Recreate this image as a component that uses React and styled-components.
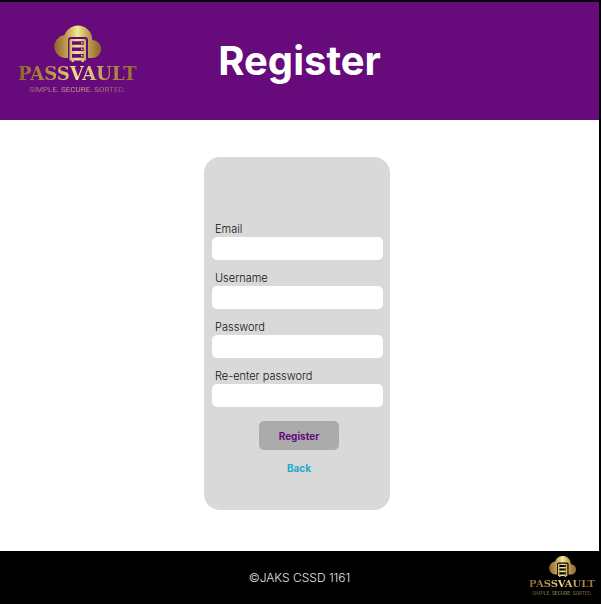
import React, { useId } from "react";
import styled, { createGlobalStyle } from "styled-components";

const GlobalStyle = createGlobalStyle`
  *, *::before, *::after { box-sizing: border-box; }
  body {
    margin: 0;
    background: #fff;
    font-family: Inter, "Liberation Sans", sans-serif;
  }
`;

const Page = styled.div`
  display: flex;
  flex-direction: column;
  min-height: 100vh;
  border-top: 2px solid #000;
  border-right: 2px solid #000;
`;

const Header = styled.header`
  display: grid;
  grid-template-columns: 1fr auto 1fr;
  align-items: center;
  min-height: 118px;
  padding: 0 18px;
  background: #670a7b;
`;

const Title = styled.h1`
  margin: 0;
  color: #fff;
  font-size: 40px;
  line-height: 48px;
  font-weight: 700;
`;

const Main = styled.main`
  flex: 1;
  display: flex;
  justify-content: center;
  align-items: flex-start;
  padding: 37px 5px 41px 0;
`;

const Card = styled.form`
  display: flex;
  flex-direction: column;
  gap: 12px;
  width: 31%;
  min-width: 186px;
  padding: 66px 7px 35px 8px;
  border-radius: 16px;
  background: #d9d9d9;
`;

const Field = styled.div`
  display: flex;
  flex-direction: column;
`;

const Label = styled.label`
  padding: 0 0 2px 3px;
  color: #111;
  font-size: 11px;
  line-height: 12px;
  font-weight: 300;
`;

const Input = styled.input`
  width: 100%;
  height: 23px;
  padding: 0 6px;
  border: 0;
  border-radius: 5px;
  background: #fff;
  font: inherit;
  font-size: 11px;
`;

const Actions = styled.div`
  display: flex;
  flex-direction: column;
  align-items: center;
  gap: 11px;
  padding: 2px 0 0 3px;
`;

const SubmitButton = styled.button`
  width: 80px;
  height: 29px;
  padding: 0;
  border: 0;
  border-radius: 5px;
  background: #ababab;
  color: #670a7b;
  font-family: inherit;
  font-size: 10px;
  font-weight: 700;
  cursor: pointer;
`;

const BackLink = styled.a`
  color: #22a7c8;
  font-size: 10px;
  line-height: 14px;
  font-weight: 700;
  text-decoration: none;
`;

const Footer = styled.footer`
  display: grid;
  grid-template-columns: 1fr auto 1fr;
  align-items: center;
  min-height: 53px;
  padding: 0 4px;
  background: #000;
`;

const Copyright = styled.p`
  grid-column: 2;
  margin: 0;
  color: #e4e4e4;
  font-size: 12px;
  line-height: 16px;
  font-weight: 300;
`;

const Brand = styled.div`
  justify-self: ${(p) => (p.$small ? "end" : "start")};
  display: flex;
  flex-direction: column;
  align-items: center;
  padding-bottom: ${(p) => (p.$small ? 4 : 2)}px;
  white-space: nowrap;
`;

const CloudIcon = styled.svg`
  display: block;
  width: ${(p) => (p.$small ? 27 : 47)}px;
  height: ${(p) => (p.$small ? 22 : 38)}px;
  margin-bottom: ${(p) => (p.$small ? 1 : 2)}px;
`;

const Wordmark = styled.span`
  background: linear-gradient(90deg, #8d6530, #b28b46 25%, #f1e995 52%, #b8924a 75%, #94692f);
  background-clip: text;
  -webkit-background-clip: text;
  color: transparent;
  font-family: "DejaVu Serif", serif;
  font-weight: 700;
  font-size: ${(p) => (p.$small ? 10 : 18)}px;
  line-height: ${(p) => (p.$small ? 12 : 20)}px;
`;

const Tagline = styled.span`
  background: ${(p) =>
    p.$small
      ? "linear-gradient(90deg, #66502c, #a89560 50%, #66502c)"
      : "linear-gradient(90deg, #9c6878, #d0ae96 50%, #8e5478)"};
  background-clip: text;
  -webkit-background-clip: text;
  color: transparent;
  font-family: Roboto, sans-serif;
  font-size: ${(p) => (p.$small ? 5 : 8)}px;
  line-height: ${(p) => (p.$small ? 6 : 12)}px;
`;

function Logo({ small }) {
  const id = useId();
  const gold = `url(#${id})`;
  return (
    <Brand $small={small}>
      <CloudIcon $small={small} viewBox="0 0 47 38" aria-hidden="true">
        <defs>
          <linearGradient id={id} gradientUnits="userSpaceOnUse" x1="0" y1="0" x2="47" y2="0">
            <stop offset="0" stopColor="#8d632c" />
            <stop offset="0.25" stopColor="#bd994f" />
            <stop offset="0.5" stopColor="#f1e994" />
            <stop offset="0.75" stopColor="#bd994f" />
            <stop offset="1" stopColor="#8d632c" />
          </linearGradient>
        </defs>
        <path
          fill={gold}
          d="M14 34H11A11.5 11.5 0 0 1 10.5 11.1A14.3 14.3 0 0 1 38.3 16A9 9 0 0 1 38 34H34V16Q34 13 31 13H17Q14 13 14 16Z"
        />
        <path
          fill={gold}
          fillRule="evenodd"
          d="M17 15H30.5Q32 15 32 16.5V36.5H30V38H27.5V36.5H20V38H17.5V36.5H15.5V16.5Q15.5 15 17 15ZM18 17.3V20.7H29.7V17.3ZM18 23.5V27H29.7V23.5ZM18 30V33.7H29.7V30Z"
        />
        <path fill={gold} d="M27 18.3h1.5v1.4h-1.5zM27 24.6h1.5v1.4h-1.5zM27 31.1h1.5v1.4h-1.5z" />
      </CloudIcon>
      <Wordmark $small={small}>PASSVAULT</Wordmark>
      <Tagline $small={small}>SIMPLE. SECURE. SORTED.</Tagline>
    </Brand>
  );
}

const fields = [
  { id: "email", label: "Email", type: "email" },
  { id: "username", label: "Username", type: "text" },
  { id: "password", label: "Password", type: "password" },
  { id: "confirm", label: "Re-enter password", type: "password" },
];

export default function App() {
  return (
    <>
      <GlobalStyle />
      <Page>
        <Header>
          <Logo />
          <Title>Register</Title>
        </Header>
        <Main>
          <Card onSubmit={(e) => e.preventDefault()}>
            {fields.map((f) => (
              <Field key={f.id}>
                <Label htmlFor={f.id}>{f.label}</Label>
                <Input id={f.id} name={f.id} type={f.type} />
              </Field>
            ))}
            <Actions>
              <SubmitButton type="submit">Register</SubmitButton>
              <BackLink href="#back">Back</BackLink>
            </Actions>
          </Card>
        </Main>
        <Footer>
          <Copyright>©JAKS CSSD 1161</Copyright>
          <Logo small />
        </Footer>
      </Page>
    </>
  );
}
